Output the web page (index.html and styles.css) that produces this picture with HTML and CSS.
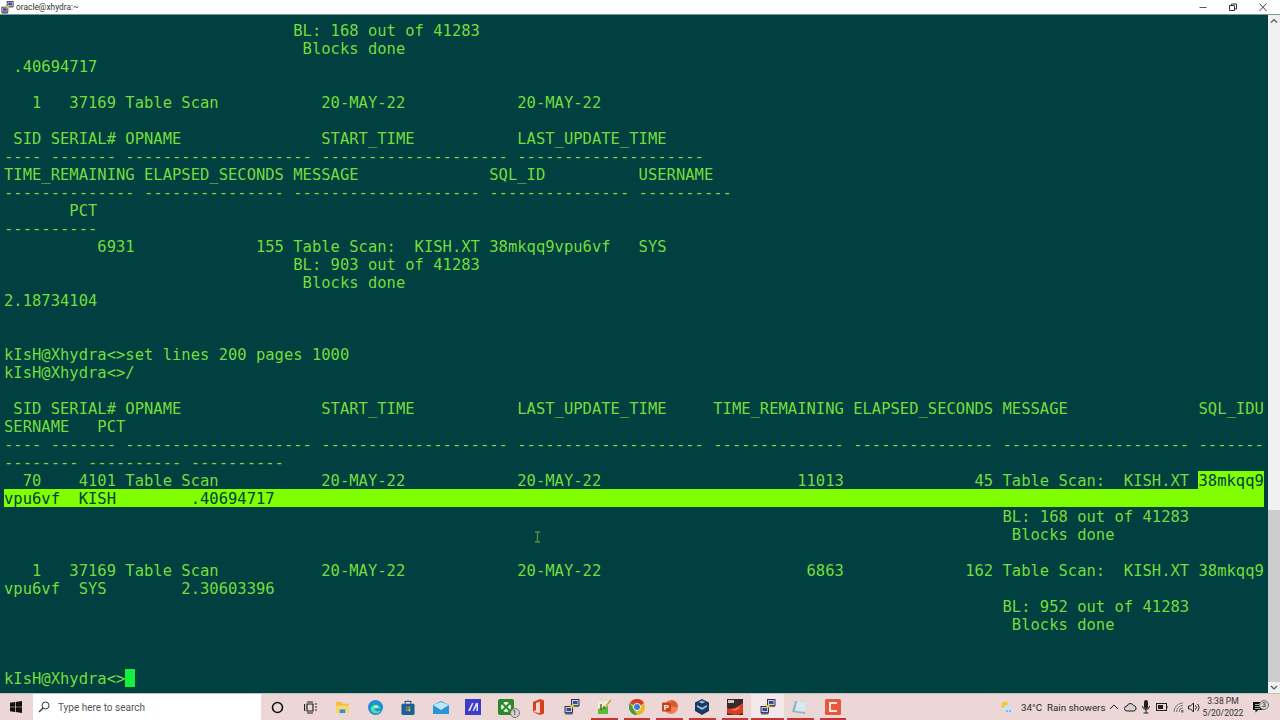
FILE: index.html
```html
<!DOCTYPE html>
<html lang="en">
<head>
  <meta charset="UTF-8">
  <title>oracle@xhydra:~</title>
  <link rel="stylesheet" href="styles.css">
</head>
<body>

  <svg class="defs" width="0" height="0">
    <symbol id="putty" viewBox="0 0 16 16">
      <rect x="7.5" y="0.5" width="7.5" height="6" fill="#c8ccd8" stroke="#30344c"/>
      <rect x="9" y="2" width="4.5" height="3" fill="#3a46a8"/>
      <rect x="8" y="6.5" width="7" height="1.6" fill="#6a6e80"/>
      <rect x="1" y="7.5" width="7.5" height="6" fill="#c8ccd8" stroke="#30344c"/>
      <rect x="2.5" y="9" width="4.5" height="3" fill="#3a46a8"/>
      <rect x="1" y="13.5" width="7.5" height="2" fill="#5a5e70"/>
      <path d="M6.5 7.5 L9.5 6.5 M5.5 6 L10 8.5" stroke="#e8d020" stroke-width="1.6"/>
    </symbol>
  </svg>

  <!-- Title bar -->
  <header class="titlebar">
    <svg class="title-icon" width="13" height="13"><use href="#putty"/></svg>
    <span class="title-text">oracle@xhydra:~</span>
    <div class="win-buttons">
      <svg width="30" height="15" viewBox="0 0 30 15"><path d="M11.5 7.5h7" stroke="#555" stroke-width="1"/></svg>
      <svg width="30" height="15" viewBox="0 0 30 15"><path d="M11.5 5.5h5v5h-5z M13.5 5.5v-1.500h5v5h-2" fill="none" stroke="#333" stroke-width="1"/></svg>
      <svg width="32" height="15" viewBox="0 0 32 15"><path d="M11.5 3.5l7 7.5M18.5 3.5l-7 7.5" stroke="#444" stroke-width="1"/></svg>
    </div>
  </header>

  <!-- Terminal -->
  <main class="window">
    <div class="terminal">
      <div class="row">                               BL: 168 out of 41283</div>
      <div class="row">                                Blocks done</div>
      <div class="row"> .40694717</div>
      <div class="row"></div>
      <div class="row">   1   37169 Table Scan           20-MAY-22            20-MAY-22</div>
      <div class="row"></div>
      <div class="row"> SID SERIAL# OPNAME               START_TIME           LAST_UPDATE_TIME</div>
      <div class="row">---- ------- -------------------- -------------------- --------------------</div>
      <div class="row">TIME_REMAINING ELAPSED_SECONDS MESSAGE              SQL_ID          USERNAME</div>
      <div class="row">-------------- --------------- -------------------- --------------- ----------</div>
      <div class="row">       PCT</div>
      <div class="row">----------</div>
      <div class="row">          6931             155 Table Scan:  KISH.XT 38mkqq9vpu6vf   SYS</div>
      <div class="row">                               BL: 903 out of 41283</div>
      <div class="row">                                Blocks done</div>
      <div class="row">2.18734104</div>
      <div class="row"></div>
      <div class="row"></div>
      <div class="row">kIsH@Xhydra&lt;&gt;set lines 200 pages 1000</div>
      <div class="row">kIsH@Xhydra&lt;&gt;/</div>
      <div class="row"></div>
      <div class="row"> SID SERIAL# OPNAME               START_TIME           LAST_UPDATE_TIME     TIME_REMAINING ELAPSED_SECONDS MESSAGE              SQL_IDU</div>
      <div class="row">SERNAME   PCT</div>
      <div class="row">---- ------- -------------------- -------------------- -------------------- -------------- --------------- -------------------- -------</div>
      <div class="row">-------- ---------- ----------</div>
      <div class="row">  70    4101 Table Scan           20-MAY-22            20-MAY-22                     11013              45 Table Scan:  KISH.XT <span class="selected">38mkqq9</span></div>
      <div class="row selected">vpu6vf  KISH        .40694717</div>
      <div class="row">                                                                                                           BL: 168 out of 41283</div>
      <div class="row">                                                                                                            Blocks done</div>
      <div class="row"></div>
      <div class="row">   1   37169 Table Scan           20-MAY-22            20-MAY-22                      6863             162 Table Scan:  KISH.XT 38mkqq9</div>
      <div class="row">vpu6vf  SYS        2.30603396</div>
      <div class="row">                                                                                                           BL: 952 out of 41283</div>
      <div class="row">                                                                                                            Blocks done</div>
      <div class="row"></div>
      <div class="row"></div>
      <div class="row">kIsH@Xhydra&lt;&gt;<span class="cursor"> </span></div>
      <svg class="ibeam" width="7" height="12" viewBox="0 0 7 12"><path d="M1 1h5M1 11h5M3.500 1v10" stroke="#5c8a38" stroke-width="1.400" fill="none"/></svg>
    </div>

    <div class="scrollbar">
      <svg width="12" height="12" viewBox="0 0 12 12"><path d="M3 7.500l3-3 3 3" fill="none" stroke="#555" stroke-width="1.200"/></svg>
      <div class="track"><div class="thumb"></div></div>
      <svg width="12" height="11" viewBox="0 0 12 11"><path d="M3 4l3 3 3-3" fill="none" stroke="#555" stroke-width="1.200"/></svg>
    </div>
  </main>

  <!-- Taskbar -->
  <footer class="taskbar">
    <div class="start">
      <svg width="12" height="12" viewBox="0 0 12 12"><path d="M0 1.700l5-.7v4.700H0zM5.700.9L12 0v5.700H5.700zM0 6.300h5V11l-5-.7zM5.700 6.300H12V12l-6.300-.9z" fill="#111"/></svg>
    </div>
    <div class="search">
      <svg width="12" height="12" viewBox="0 0 12 12"><circle cx="7.500" cy="4.500" r="3.500" fill="none" stroke="#333" stroke-width="1"/><path d="M5 7l-4 4" stroke="#333" stroke-width="1.200"/></svg>
      <span>Type here to search</span>
    </div>
    <div class="apps">
      <div class="app"><svg width="13" height="13" viewBox="0 0 13 13"><circle cx="6.500" cy="6.500" r="5" fill="none" stroke="#111" stroke-width="1.600"/></svg></div>
      <div class="app"><svg width="13" height="13" viewBox="0 0 13 13"><path d="M3 3h6v7H3z" fill="none" stroke="#222" stroke-width="1.200"/><path d="M0.500 3v7M11 3h2M11 6h2M11 9h2M3 1h6M3 12h6" stroke="#222" stroke-width="1.200"/></svg></div>
      <div class="app"><svg width="15" height="13" viewBox="0 0 16 14"><path d="M1 1h6l1 2h7v3H1z" fill="#f0c040"/><path d="M1 5h14v8H1z" fill="#f7d774"/><path d="M5 9h6v4H5z" fill="#3a8fd0"/></svg></div>
      <div class="app"><svg width="15" height="15" viewBox="0 0 16 16"><circle cx="8" cy="8" r="8" fill="#1c8fd8"/><path d="M3 9c1-5 9-6 10 0H7c0 3 4 4 7 2-2 5-11 4-11-2z" fill="#58e0a0"/><path d="M6 8c1-2 4-2 5 0z" fill="#e8f4fa"/></svg></div>
      <div class="app"><svg width="14" height="15" viewBox="0 0 15 16"><path d="M4.500 4V1.500h6V4" fill="none" stroke="#1c5a8a" stroke-width="1.200"/><rect x="0.500" y="4" width="14" height="12" rx="1.500" fill="#1c5f94"/><path d="M5 7h2.200v2.200H5z" fill="#e8502a"/><path d="M7.800 7H10v2.200H7.800z" fill="#7cc02a"/><path d="M5 9.800h2.200V12H5z" fill="#2aa0e8"/><path d="M7.800 9.800H10V12H7.800z" fill="#f0c020"/></svg></div>
      <div class="app"><svg width="16" height="13" viewBox="0 0 16 13"><path d="M0 4l8-4 8 4v9H0z" fill="#2a94d8"/><path d="M0 4l8 5 8-5-8-3z" fill="#bfe6f8"/></svg></div>
      <div class="app"><svg width="16" height="16" viewBox="0 0 16 16"><rect width="16" height="16" fill="#3c3cc8"/><path d="M3 12L7 4h1.500L5 12zM7.500 12L11 4h2v8h-1.500V7L9 12z" fill="#dfe4fa"/></svg></div>
      <div class="app badge-wrap">
        <svg width="16" height="16" viewBox="0 0 16 16"><rect width="16" height="16" rx="2" fill="#2a8a2a"/><circle cx="8" cy="8" r="5" fill="#f4f8f4"/><path d="M4 4l8 8M12 4l-8 8" stroke="#2a8a2a" stroke-width="2"/></svg>
        <span class="badge">1</span>
      </div>
      <div class="app"><svg width="13" height="16" viewBox="0 0 13 16"><path d="M1 3l7-3 4 1.500v13L8 16l-7-3 7 1V2.500L4 4v7l-3 2z" fill="#d8401c"/></svg></div>
      <div class="app"><svg width="16" height="16"><use href="#putty"/></svg></div>
      <div class="app open"><svg width="16" height="16" viewBox="0 0 16 16"><path d="M2 2h10v13H2z" fill="#e8f0d0"/><path d="M2 10l10-3v8H2z" fill="#5cb83c"/><path d="M5 5v6M8 7v3" stroke="#6a5a20" stroke-width="1.400"/><path d="M10 7l5-6" stroke="#c8a040" stroke-width="1.400"/></svg></div>
      <div class="app open"><svg width="16" height="16" viewBox="0 0 16 16"><circle cx="8" cy="8" r="8" fill="#e8b820"/><path d="M8 8L1 4a8 8 0 0 1 14 0z" fill="#d8382c"/><path d="M8 16a8 8 0 0 1-7-12l4 7z" fill="#3c9c48"/><circle cx="8" cy="8" r="3.600" fill="#3c7cd8" stroke="#f0f0f0"/></svg></div>
      <div class="app open"><svg width="16" height="16" viewBox="0 0 16 16"><circle cx="9" cy="8" r="7" fill="#f08050"/><path d="M9 1a7 7 0 0 1 7 7H9z" fill="#e05a30"/><rect x="0" y="3.500" width="9" height="9" rx="1" fill="#c8401c"/><text class="ppt" x="4.500" y="10.500">P</text></svg></div>
      <div class="app open"><svg width="16" height="16" viewBox="0 0 16 16"><path d="M8 0l7 3.500v8.500l-7 4-7-4V3.500z" fill="#1c3a5c"/><path d="M8 4.500L11.500 3 8 1.500 4.500 3zM8 8.500L3 6v2l5 3zM8 8.500L13 6v2l-5 3z" fill="#8ab8e0"/></svg></div>
      <div class="app open"><svg width="16" height="16" viewBox="0 0 16 16"><rect width="16" height="16" fill="#3a2a2a"/><path d="M0 9c5 2 10-1 16-5v10c-5 3-11 2-16 0z" fill="#d83c20"/><path d="M4 10c3 1 6 0 9-3-1 4-6 6-9 3z" fill="#f4a080"/><rect x="1" y="1" width="6" height="3" fill="#c8c8c8"/></svg></div>
      <div class="app open active"><svg width="16" height="16"><use href="#putty"/></svg></div>
      <div class="app open"><svg width="16" height="14" viewBox="0 0 16 14"><path d="M3 1l12 1-2 12-13-2z" fill="#8ab8c8"/><path d="M5 1l10 1-1.500 10L3 11z" fill="#d8e8ec"/></svg></div>
      <div class="app open"><svg width="16" height="16" viewBox="0 0 16 16"><rect width="16" height="16" rx="1.500" fill="#e8583c"/><path d="M12 4H5v8h7" fill="none" stroke="#f6e8e0" stroke-width="2"/></svg></div>
    </div>

    <div class="tray">
      <div class="tray-slot"><svg width="15" height="14" viewBox="0 0 15 14"><circle cx="5" cy="5" r="3.500" fill="#f0c840"/><path d="M4 12a3 3 0 0 1 1-5.500 4 4 0 0 1 7 1 2.500 2.500 0 0 1 0 4.500z" fill="#cfe2f4"/><path d="M7 10v2M10 10v2" stroke="#3a8ad0"/></svg></div>
      <span class="weather-text">34°C&nbsp; Rain showers</span>
      <div class="tray-slot"><svg width="10" height="10" viewBox="0 0 10 10"><path d="M1 7l4-4 4 4" fill="none" stroke="#222" stroke-width="1"/></svg></div>
      <div class="tray-slot"><svg width="13" height="10" viewBox="0 0 13 10"><path d="M3 9a2.500 2.500 0 0 1 0-5 3.500 3.500 0 0 1 6.500-.5A2.800 2.800 0 0 1 10 9z" fill="#d8d0d0" stroke="#222"/></svg></div>
      <div class="tray-slot"><svg width="8" height="14" viewBox="0 0 8 14"><rect x="2" y="0" width="4" height="9" rx="2" fill="#222"/><path d="M0.500 6a3.500 3.500 0 0 0 7 0M4 10v3M1.500 13h5" fill="none" stroke="#222"/></svg></div>
      <div class="tray-slot"><svg width="12" height="8" viewBox="0 0 12 8"><rect x="0.500" y="0.500" width="10" height="7" fill="none" stroke="#222"/><rect x="2" y="2" width="5" height="4" fill="#222"/><path d="M11 3v2" stroke="#222"/></svg></div>
      <div class="tray-slot"><svg width="11" height="11" viewBox="0 0 11 11"><path d="M1 10a9 9 0 0 1 9-9M3.500 10a6.500 6.500 0 0 1 6.500-6.500M6 10a4 4 0 0 1 4-4" fill="none" stroke="#777"/><path d="M8 8h2.500v2.500H8z" fill="#777"/></svg></div>
      <div class="tray-slot"><svg width="12" height="11" viewBox="0 0 12 11"><path d="M0.500 4h2l3-3v9l-3-3h-2z" fill="none" stroke="#222"/><path d="M7.500 3.500a3 3 0 0 1 0 4M9.500 2a5 5 0 0 1 0 7" fill="none" stroke="#222"/></svg></div>
      <div class="clock"><span>3:38 PM</span><span>5/20/2022</span></div>
      <div class="notify">
        <svg width="12" height="11" viewBox="0 0 12 11"><path d="M0 0h11v8H5l-2.500 2.500V8H0z" fill="#111"/><path d="M2 2.500h7M2 4.500h7M2 6.500h5" stroke="#eee" stroke-width="0.700"/></svg>
        <span class="badge">3</span>
      </div>
    </div>
  </footer>

</body>
</html>
```

FILE: styles.css
```css
/* Reset and Global Styles */
* { margin: 0; padding: 0; box-sizing: border-box; }
html, body {
  width: 1280px;
  height: 720px;
  overflow: hidden;
}
body {
  display: flex;
  flex-direction: column;
  font-family: Roboto, sans-serif;
  background: #fff;
}
.defs { position: absolute; }

/* Title bar */
.titlebar {
  height: 15px;
  display: flex;
  align-items: center;
  background: #fff;
  border-bottom: 1px solid #7f9a96;
  padding-left: 1px;
  flex-shrink: 0;
}
.title-icon { margin-right: 2px; }
.title-text {
  font-size: 8.4px;
  color: #333;
}
.win-buttons {
  margin-left: auto;
  display: flex;
  align-items: center;
}

/* Terminal */
.window {
  flex: 1;
  display: flex;
  min-height: 0;
}
.terminal {
  position: relative;
  flex: 1;
  padding: 6px 0 0 4px;
  background: #004040;
  color: #74dc3c;
  font-family: "DejaVu Sans Mono", monospace;
  font-size: 15.5px;
  line-height: 20px;
  overflow: hidden;
}
.row {
  height: 18px;
  width: 1260px;
  white-space: pre;
}
.selected {
  background: #80ff00;
  color: #004040;
  display: inline-block;
  height: 18px;
}
.row.selected { display: block; }
.cursor {
  display: inline-block;
  width: 10px;
  height: 18px;
  background: #14f03c;
  vertical-align: top;
}
.ibeam {
  position: absolute;
  left: 534px;
  top: 516px;
}

/* Scrollbar */
.scrollbar {
  width: 12px;
  display: flex;
  flex-direction: column;
  background: #f0f0f0;
}
.track {
  flex: 1;
  display: flex;
  flex-direction: column;
  justify-content: flex-end;
}
.thumb {
  height: 172px;
  background: #cdcdcd;
}

/* Taskbar */
.taskbar {
  height: 27px;
  display: flex;
  align-items: stretch;
  background: #ecd6d6;
  border-top: 1px solid #b8c4c0;
  flex-shrink: 0;
  font-size: 9.8px;
  color: #2a2a2a;
}
.start {
  width: 33px;
  padding-right: 2px;
  display: flex;
  align-items: center;
  justify-content: center;
}
.search {
  width: 228px;
  display: flex;
  align-items: center;
  gap: 8px;
  padding-left: 5px;
  background: #fff;
  color: #555;
  font-size: 10px;
}
.apps { display: flex; }
.app {
  position: relative;
  width: 32.7px;
  display: flex;
  align-items: center;
  justify-content: center;
}
.app.open::after {
  content: "";
  position: absolute;
  left: 3px;
  right: 3px;
  bottom: 0;
  height: 2px;
  background: #c03838;
}
.app.active { background: #f4e8e8; }
.app.active::after { left: 0; right: 0; }
.badge {
  position: absolute;
  right: 3px;
  bottom: 2px;
  width: 10px;
  height: 10px;
  border-radius: 50%;
  background: #d8d0d0;
  border: 1px solid #777;
  color: #222;
  font-size: 7px;
  line-height: 8px;
  text-align: center;
}
.ppt {
  font-family: "Liberation Sans", sans-serif;
  font-size: 8px;
  font-weight: bold;
  fill: #fff;
  text-anchor: middle;
}

/* Tray */
.tray {
  margin-left: auto;
  padding-right: 6px;
  display: flex;
  align-items: center;
}
.tray-slot {
  width: 16px;
  display: flex;
  justify-content: center;
}
.weather-text {
  width: 91px;
  padding-left: 6px;
  white-space: nowrap;
}
.clock {
  width: 42px;
  display: flex;
  flex-direction: column;
  align-items: center;
  font-size: 8.6px;
  line-height: 12px;
  color: #333;
}
.notify {
  position: relative;
  width: 30px;
  display: flex;
  align-items: center;
  justify-content: center;
}
.notify .badge {
  right: 5px;
  bottom: 3px;
}
```
